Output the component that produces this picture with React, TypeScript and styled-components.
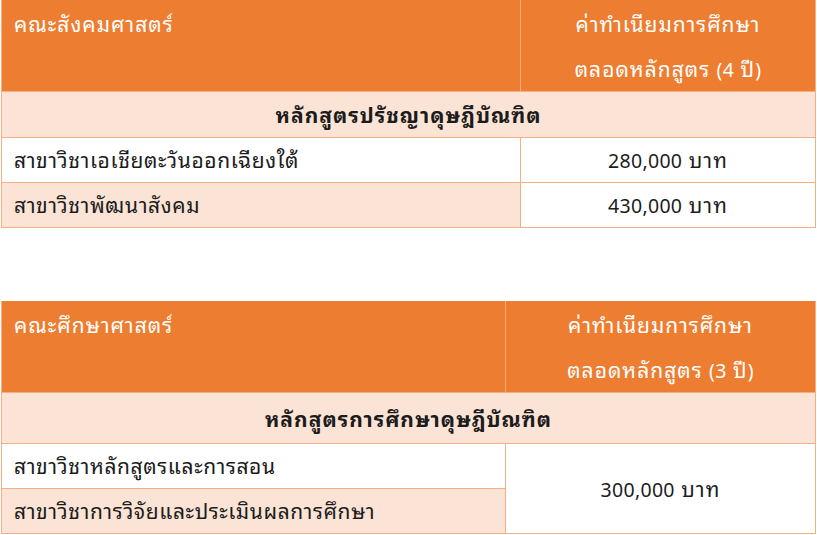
import React from "react";
import styled, { createGlobalStyle } from "styled-components";

const GlobalStyle = createGlobalStyle`
  html, body {
    margin: 0;
    padding: 0;
    background: #ffffff;
  }
  body {
    font-family: "Noto Sans Thai Looped", "Noto Sans Thai", "Noto Sans", sans-serif;
    color: #1c1c1c;
  }
`;

const ORANGE = "#ed7d31";
const PEACH = "#fbe4d5";
const LINE = "#f4b083";

interface Row {
  name: string;
  amount?: string;
  span?: number;
}

interface Faculty {
  faculty: string;
  years: number;
  program: string;
  leftWidth: number;
  subHeight: number;
  rows: Row[];
}

const faculties: Faculty[] = [
  {
    faculty: "คณะสังคมศาสตร์",
    years: 4,
    program: "หลักสูตรปรัชญาดุษฎีบัณฑิต",
    leftWidth: 519,
    subHeight: 45,
    rows: [
      { name: "สาขาวิชาเอเชียตะวันออกเฉียงใต้", amount: "280,000" },
      { name: "สาขาวิชาพัฒนาสังคม", amount: "430,000" },
    ],
  },
  {
    faculty: "คณะศึกษาศาสตร์",
    years: 3,
    program: "หลักสูตรการศึกษาดุษฎีบัณฑิต",
    leftWidth: 504,
    subHeight: 50,
    rows: [
      { name: "สาขาวิชาหลักสูตรและการสอน", amount: "300,000", span: 2 },
      { name: "สาขาวิชาการวิจัยและประเมินผลการศึกษา" },
    ],
  },
];

export default function App() {
  return (
    <>
      <GlobalStyle />
      <Page>
        {faculties.map((f) => (
          <FeeTable key={f.faculty}>
            <colgroup>
              <col style={{ width: f.leftWidth }} />
              <col />
            </colgroup>
            <thead>
              <tr>
                <HeadCell>{f.faculty}</HeadCell>
                <HeadCell $center>
                  ค่าทำเนียมการศึกษา
                  <br />
                  ตลอดหลักสูตร <Num>({f.years}</Num> ปี<Num>)</Num>
                </HeadCell>
              </tr>
            </thead>
            <tbody>
              <tr>
                <ProgramCell colSpan={2} $height={f.subHeight}>
                  {f.program}
                </ProgramCell>
              </tr>
              {f.rows.map((r, i) => (
                <tr key={r.name}>
                  <NameCell $peach={i % 2 === 1}>{r.name}</NameCell>
                  {r.amount && (
                    <PriceCell rowSpan={r.span ?? 1}>
                      <Num>{r.amount}</Num> บาท
                    </PriceCell>
                  )}
                </tr>
              ))}
            </tbody>
          </FeeTable>
        ))}
      </Page>
    </>
  );
}

const Page = styled.div`
  display: flex;
  flex-direction: column;
  gap: 73px;
  padding-left: 1px;
`;

const FeeTable = styled.table`
  width: 815px;
  border-collapse: collapse;
  table-layout: fixed;
  font-size: 21px;
  letter-spacing: 1px;
`;

const Num = styled.span`
  font-size: 19.5px;
  letter-spacing: 0.3px;
`;

const HeadCell = styled.th<{ $center?: boolean }>`
  background: ${ORANGE};
  color: #ffffff;
  font-weight: normal;
  text-align: ${(p) => (p.$center ? "center" : "left")};
  vertical-align: top;
  line-height: 45px;
  height: 90px;
  padding: 0 12px;
  border-left: 1px solid ${LINE};
  border-right: 1px solid ${LINE};
  border-bottom: 1px solid ${LINE};
  box-sizing: border-box;
`;

const ProgramCell = styled.td<{ $height: number }>`
  background: ${PEACH};
  font-weight: bold;
  text-align: center;
  height: ${(p) => p.$height - 2}px;
  padding: 0 12px 2px;
  border: 1px solid ${LINE};
`;

const NameCell = styled.td<{ $peach: boolean }>`
  background: ${(p) => (p.$peach ? PEACH : "#ffffff")};
  height: 41px;
  padding: 0 12px 3px;
  letter-spacing: 0.6px;
  border: 1px solid ${LINE};
`;

const PriceCell = styled.td`
  background: #ffffff;
  text-align: center;
  padding: 0 12px 3px;
  border: 1px solid ${LINE};
`;
